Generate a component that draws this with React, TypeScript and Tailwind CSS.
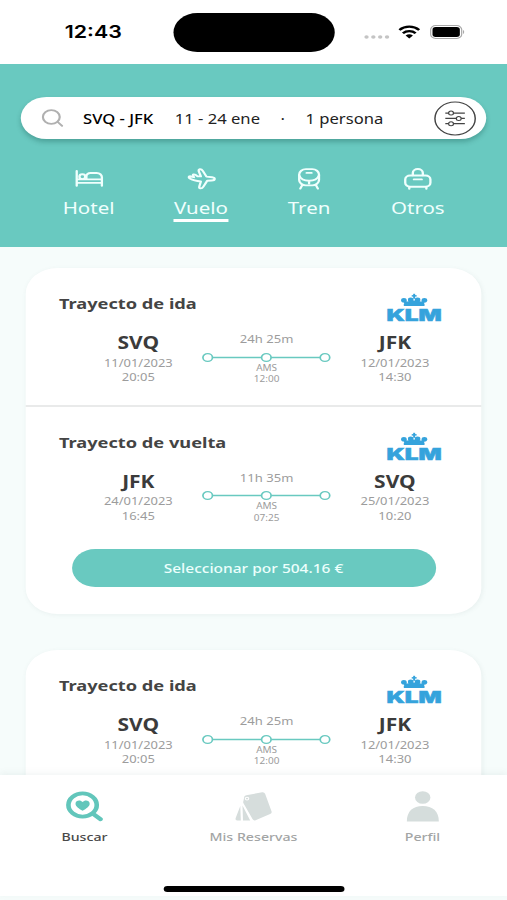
import React from "react";

type Stop = { code: string; date: string; time: string };
type Leg = {
  title: string;
  from: Stop;
  to: Stop;
  duration: string;
  via: string;
  viaTime: string;
};

const outbound: Leg = {
  title: "Trayecto de ida",
  from: { code: "SVQ", date: "11/01/2023", time: "20:05" },
  to: { code: "JFK", date: "12/01/2023", time: "14:30" },
  duration: "24h 25m",
  via: "AMS",
  viaTime: "12:00",
};

const inbound: Leg = {
  title: "Trayecto de vuelta",
  from: { code: "JFK", date: "24/01/2023", time: "16:45" },
  to: { code: "SVQ", date: "25/01/2023", time: "10:20" },
  duration: "11h 35m",
  via: "AMS",
  viaTime: "07:25",
};

function StatusBar() {
  return (
    <div className="grid h-[63.5px] shrink-0 grid-cols-[141.6px_132px_1fr] bg-white">
      <div className="pt-[21px] pl-[53px] font-['Inter'] text-[17.5px] leading-[22px] font-semibold text-black">
        12:43
      </div>
      <div className="mt-[13px] h-[38.5px] rounded-full bg-black" />
      <div className="flex pl-[24px]">
        <svg className="mt-[34.5px] h-1 w-[21px] shrink-0" viewBox="0 0 21 4" fill="#c4c4c4">
          <circle cx="2" cy="2" r="1.8" />
          <circle cx="7.6" cy="2" r="1.8" />
          <circle cx="13.2" cy="2" r="1.8" />
          <circle cx="18.8" cy="2" r="1.8" />
        </svg>
        <svg className="mt-[24.5px] ml-[7.5px] h-[14px] w-[18px] shrink-0" viewBox="0 0 18 14" fill="none" stroke="#000" strokeWidth="2.3">
          <path d="M.9 5A11.6 11.6 0 0 1 17.1 5" />
          <path d="M3.8 8.2a7.4 7.4 0 0 1 10.4 0" />
          <path d="M9 13.6 6 10.6a4.3 4.3 0 0 1 6 0z" fill="#000" stroke="none" />
        </svg>
        <svg className="mt-[25px] ml-[8px] h-[14px] w-[29px] shrink-0" viewBox="0 0 29 14" fill="none">
          <rect x=".5" y=".6" width="25.4" height="12.8" rx="4" stroke="#a9a9a9" />
          <rect x="2" y="2.1" width="22.4" height="9.8" rx="2.6" fill="#000" />
          <path d="M27 5v4c1.3-.6 1.3-3.4 0-4z" fill="#a9a9a9" />
        </svg>
      </div>
    </div>
  );
}

function SearchBar() {
  return (
    <div className="mx-auto flex h-[42px] w-[381px] items-center rounded-full bg-white text-[13.6px] leading-5 text-[#222] shadow-[0_3px_5px_rgba(0,60,55,0.28)]">
      <svg className="ml-[16.5px] h-[18px] w-[18px] shrink-0" viewBox="0 0 18 18" fill="none" stroke="#b0b0b0" strokeWidth="1.8" strokeLinecap="round">
        <circle cx="8" cy="8" r="6.9" />
        <path d="m13.3 13 3.5 3.8" />
      </svg>
      <span className="mt-px ml-[16.5px] w-[75px] shrink-0 font-medium whitespace-nowrap text-black">SVQ - JFK</span>
      <span className="mt-px w-[86.5px] shrink-0 whitespace-nowrap">11 - 24 ene</span>
      <span className="mt-px w-[20.5px] shrink-0">·</span>
      <span className="mt-px flex-1 whitespace-nowrap">1 persona</span>
      <svg className="mr-[8.2px] h-[35px] w-[35px] shrink-0" viewBox="0 0 35 35" fill="none" stroke="#444">
        <circle cx="17.5" cy="17.5" r="16.5" strokeWidth="1.2" />
        <path d="M9.5 12.1h2.7M16.2 12.1h9.3M9.5 17.4h9M22.5 17.4h3M9.5 22.7h2.7M16.2 22.7h9.3" strokeWidth="1.3" />
        <circle cx="14.2" cy="12.1" r="2" />
        <circle cx="20.5" cy="17.4" r="2" />
        <circle cx="14.2" cy="22.7" r="2" />
      </svg>
    </div>
  );
}

const icons: Record<string, React.ReactNode> = {
  Hotel: (
    <>
      <path d="M1.8 4v14.8M1.8 15.9h20.6M1.8 12.4h20.6M22.4 18.8v-8.6a4.2 4.2 0 0 0-4.2-4.2h-5c-2.2 0-3.5 1.5-3.5 3.6v2.8" />
      <circle cx="6.4" cy="9.7" r="2.4" />
    </>
  ),
  Vuelo: (
    <path d="M16 9.600 20.600 10.200Q22.800 10.600 22.700 12Q22.500 13.400 20.300 13.500L16.600 13.700L13.500 19.600Q12.500 21.600 11.100 21.400Q9.700 21 10.200 19.200L11.400 14.500Q5.600 13.800 2.800 11.800Q1.100 10.400 1.800 9.500Q2.500 8.800 4.300 9.800L5.800 10.200Q4.300 8 5.400 7.400Q6.700 7 8.700 9.300L11.400 9.400L9.700 4.300Q9.400 2.500 10.600 2.200Q12 2 13 3.900Z" />
  ),
  Tren: (
    <>
      <rect x="3.9" y="2.1" width="16.2" height="16.3" rx="5.5" />
      <path d="M10 5.9h4M3.900 8.500c1.400 4.200 4.500 5.200 8.100 5.200s6.700-1 8.100-5.200M12 14v2.600M6.400 18.200 4.800 21.600M17.600 18.200l1.600 3.400" />
    </>
  ),
  Otros: (
    <>
      <rect x="1.7" y="8.5" width="20.6" height="11.2" rx="4" />
      <path d="M7.900 8.300V6a4.100 4 0 0 1 8.200 0v2.300M8.800 12.400h6.400M5 20v1.700M19 20v1.700" />
    </>
  ),
};

function CategoryTabs() {
  const tabs = [
    { name: "Hotel", cell: "w-[92px]" },
    { name: "Vuelo", cell: "w-[92px]" },
    { name: "Tren", cell: "w-[85px]" },
    { name: "Otros", cell: "w-[93px]" },
  ];
  return (
    <div className="mt-[28px] flex pl-[26.5px] text-[16.8px] leading-6 text-[#f0fffd]">
      {tabs.map(({ name, cell }) => (
        <div key={name} className={`flex shrink-0 flex-col items-center ${cell}`}>
          <svg className="h-6 w-6" viewBox="0 0 24 24" fill="none" stroke="#f0fffd" strokeWidth="1.9" strokeLinejoin="round" strokeLinecap="round">
            {icons[name]}
          </svg>
          <div className={`mt-[5px] h-[26px] ${name === "Vuelo" ? "border-b-[3px] border-white" : ""}`}>{name}</div>
        </div>
      ))}
    </div>
  );
}

function KlmLogo() {
  return (
    <svg className="h-[28px] w-[46px] overflow-visible" viewBox="0 0 46 28" fill="#35a3dc">
      <rect x="22.2" y=".8" width="1.6" height="5" />
      <rect x="21" y="2.1" width="4" height="1.5" />
      <circle cx="14.6" cy="7.2" r="2.3" />
      <circle cx="20.2" cy="6.9" r="2.3" />
      <circle cx="25.8" cy="6.9" r="2.3" />
      <circle cx="31.4" cy="7.2" r="2.3" />
      <path d="M14 7.500 15 11h16l1-3.500-3.400 1-5.600-1-5.600 1z" />
      <rect x="14.5" y="10.6" width="17" height="2.5" rx=".5" />
      <text x=".3" y="27.6" fontFamily="Inter" fontWeight="900" fontSize="16" stroke="#35a3dc" strokeWidth=".5" textLength="45.2" lengthAdjust="spacingAndGlyphs">
        KLM
      </text>
    </svg>
  );
}

function StopColumn({ stop }: { stop: Stop }) {
  return (
    <div className="text-center text-[10.6px] leading-[14.6px] text-[#9c9c9c]">
      <div className="pb-[1.5px] text-[17.2px] leading-[22px] font-bold text-[#3b3b3b]">{stop.code}</div>
      <div>{stop.date}</div>
      <div>{stop.time}</div>
    </div>
  );
}

function LegSection({ leg }: { leg: Leg }) {
  return (
    <section className="h-[136.5px] pt-[25px]">
      <div className="flex h-[39px] justify-between pr-[32px] pl-[27px]">
        <h2 className="-mt-[0.8px] text-[14.9px] leading-[22px] font-bold text-[#444]">{leg.title}</h2>
        <KlmLogo />
      </div>
      <div className="grid grid-cols-[105px_105px_105px] pl-[39.5px]">
        <StopColumn stop={leg.from} />
        <div className="text-center text-[8.2px] leading-[11.5px] text-[#9c9c9c]">
          <div className="h-[18.5px] text-[10.7px] leading-[15px]">{leg.duration}</div>
          <svg className="-ml-[0.6px] block h-[11px] w-[106px] overflow-visible" viewBox="0 0 106 11" fill="#fff" stroke="#69c9c0">
            <path d="M5 6.500h96" strokeWidth="1.6" />
            <circle cx="5" cy="6.5" r="3.9" strokeWidth="1.4" />
            <circle cx="53" cy="6.5" r="3.9" strokeWidth="1.4" />
            <circle cx="101" cy="6.5" r="3.9" strokeWidth="1.4" />
          </svg>
          <div>{leg.via}</div>
          <div>{leg.viaTime}</div>
        </div>
        <StopColumn stop={leg.to} />
      </div>
    </section>
  );
}

function FlightCard({ legs, price }: { legs: Leg[]; price?: string }) {
  return (
    <article className="h-[346px] w-[372.5px] shrink-0 rounded-[26px] bg-white shadow-[1px_1px_4px_rgba(90,120,115,0.08)]">
      {legs.map((leg, i) => (
        <React.Fragment key={leg.title}>
          {i > 0 && <div className="h-[2px] bg-[#e9eaea]" />}
          <LegSection leg={leg} />
        </React.Fragment>
      ))}
      {price && (
        <button className="mx-auto mt-[6px] block h-[38px] w-[298px] rounded-full bg-[#69c9c0] text-[12.7px] leading-[38px] font-medium text-[#ecfffc]">
          Seleccionar por {price} €
        </button>
      )}
    </article>
  );
}

function BottomNav() {
  return (
    <nav className="flex h-[121px] shrink-0 flex-col bg-white shadow-[0_-2px_6px_rgba(90,120,115,0.08)]">
      <div className="grid flex-1 grid-cols-3 pt-[14px] text-center text-[11.6px] leading-4 font-medium text-[#a3a5a5]">
        <div className="text-[#4a4a4a]">
          <svg className="mx-auto h-[36px] w-[36px]" viewBox="0 0 36 36" fill="none" stroke="#62c6bb" strokeLinecap="round">
            <circle cx="16.6" cy="16" r="11.6" strokeWidth="3.8" />
            <path d="m25.700 25.300 5.600 5" strokeWidth="3.9" />
            <path d="M16.600 21.800c-3-2-5.800-4.400-5.800-7 0-3.500 4-4.400 5.800-1.700 1.800-2.700 5.800-1.800 5.800 1.700 0 2.600-2.800 5-5.800 7z" fill="#62c6bb" stroke="none" />
          </svg>
          <div className="mt-[4px]">Buscar</div>
        </div>
        <div>
          <svg className="mx-auto h-[36px] w-[36px]" viewBox="0 0 36 36" fill="#d6dddc">
            <path d="m12.600 6.200 13-2.900q1.800-.3 2.400 1.500l5.300 17.700q.4 1.800-1.200 2.600L20.200 31.200q-1.600.7-2.400-.9L10.300 14.300q-.5-1.200 0-2.600l.7-4.300q.4-1 1.600-1.200z" />
            <path d="m9.500 16.500 6.300 15H9.900zM7.700 17 8.100 31.500H5.300q-2-.4-1.400-2.600z" />
            <circle cx="13.2" cy="9.6" r="1.4" stroke="#fff" strokeWidth=".9" />
          </svg>
          <div className="mt-[4px]">Mis Reservas</div>
        </div>
        <div>
          <svg className="mx-auto h-[36px] w-[36px]" viewBox="0 0 36 36" fill="#d5dddc">
            <circle cx="18" cy="8.5" r="6.3" />
            <path d="M5 32.500C5 22 10 17 18 17s13.200 5 13.200 15.500z" />
          </svg>
          <div className="mt-[4px]">Perfil</div>
        </div>
      </div>
      <div className="mx-auto mb-[4.5px] h-[5.5px] w-[148px] rounded-full bg-black" />
    </nav>
  );
}

export default function App() {
  return (
    <div className="h-[900px] w-[507px] overflow-hidden bg-[#f6fcfb]">
      <div className="flex h-[900px] w-[415px] origin-top-left scale-x-[1.2217] flex-col overflow-hidden bg-[#f6fcfb] font-['Noto_Sans','Open_Sans',sans-serif]">
        <StatusBar />
        <header className="h-[183.5px] shrink-0 bg-[#69c9c0] pt-[33.5px]">
          <SearchBar />
          <CategoryTabs />
        </header>
        <main className="flex h-[528px] shrink-0 flex-col items-center gap-[36px] overflow-hidden pt-[21px]">
          <FlightCard legs={[outbound, inbound]} price="504.16" />
          <FlightCard legs={[outbound]} />
        </main>
        <BottomNav />
      </div>
    </div>
  );
}
